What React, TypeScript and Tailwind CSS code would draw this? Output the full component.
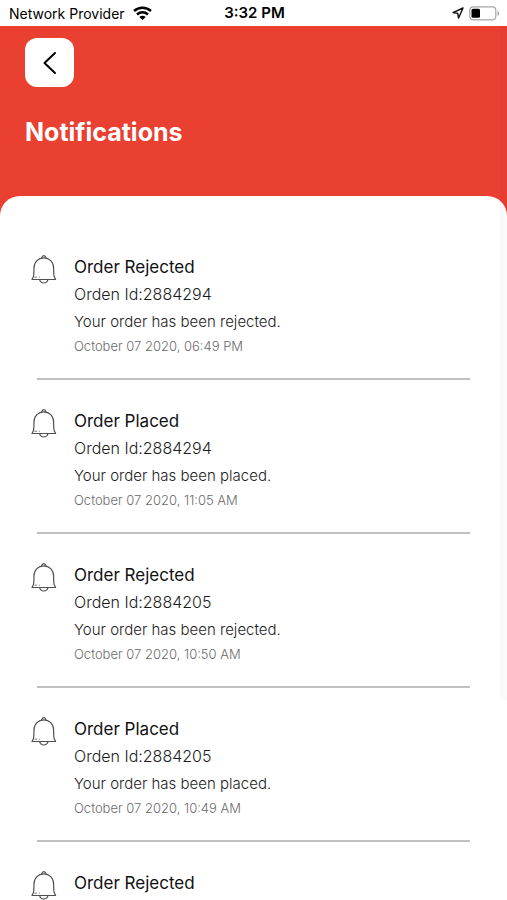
import React from 'react';

interface Notification {
  id: number;
  title: string;
  orderId?: string;
  message?: string;
  date?: string;
}

const notifications: Notification[] = [
  { id: 1, title: 'Order Rejected', orderId: '2884294', message: 'Your order has been rejected.', date: 'October 07 2020, 06:49 PM' },
  { id: 2, title: 'Order Placed', orderId: '2884294', message: 'Your order has been placed.', date: 'October 07 2020, 11:05 AM' },
  { id: 3, title: 'Order Rejected', orderId: '2884205', message: 'Your order has been rejected.', date: 'October 07 2020, 10:50 AM' },
  { id: 4, title: 'Order Placed', orderId: '2884205', message: 'Your order has been placed.', date: 'October 07 2020, 10:49 AM' },
  { id: 5, title: 'Order Rejected' },
];

const BellIcon = () => (
  <svg className="w-[26px] h-[30px] shrink-0" viewBox="0 0 26 30" fill="none" stroke="#505050" strokeWidth="1.2" strokeLinejoin="round" aria-hidden="true">
    <path d="M10.500 4.200C11 2.400 11.800 1.600 12.800 1.600s1.800.8 2.300 2.600" />
    <path d="M2.500 22.500C2.900 20 3 17 3 14C3 7.800 7.300 3.800 12.800 3.800S22.600 7.800 22.600 14c0 3 .1 6 .5 8.500L24.600 25.500H1L2.500 22.500z" />
    <path d="M8.600 25.700C9.200 27.800 10.600 29 12.800 29s3.600-1.200 4.200-3.300" />
    <path d="M3.500 23.200h2.500M7.800 23.200h1" strokeWidth="0.8" />
  </svg>
);

const WifiIcon = () => (
  <svg className="w-[19px] h-[14px]" viewBox="0 0 19 14" fill="none" stroke="#000" strokeWidth="2.600" aria-hidden="true">
    <path d="M1 4.900C5.900.6 13.100.6 18 4.900" />
    <path d="M4 8.400c3.200-2.700 7.800-2.700 11 0" />
    <path d="M9.500 14L6.300 10.900c1.800-1.500 4.600-1.500 6.400 0z" fill="#000" stroke="none" />
  </svg>
);

const LocationIcon = () => (
  <svg className="w-[12px] h-[12px]" viewBox="0 0 12 12" fill="none" stroke="#111" strokeWidth="1.400" strokeLinejoin="round" aria-hidden="true">
    <path d="M11 1L1 5.600l4.700.7L6.600 11z" />
  </svg>
);

const BatteryIcon = () => (
  <svg className="w-[31px] h-[15px]" viewBox="0 0 31 15" fill="none" aria-hidden="true">
    <rect x="0.800" y="0.800" width="26" height="13" rx="3.500" stroke="#a6a6a6" strokeWidth="1.200" />
    <rect x="2.500" y="2.800" width="8.500" height="9" rx="1.500" fill="#000" />
    <path d="M28.500 5v5c1-.4 1.700-1.400 1.700-2.500S29.500 5.400 28.500 5z" fill="#a6a6a6" />
  </svg>
);

const StatusBar = () => (
  <div className="grid grid-cols-[1fr_auto_1fr] items-center h-[26px] pl-[9px] pr-[7px] bg-white text-black">
    <div className="flex items-center gap-2 text-[14px]">
      <span>Network Provider</span>
      <WifiIcon />
    </div>
    <span className="text-[15px] font-semibold">3:32 PM</span>
    <div className="flex items-center justify-end gap-[5px]">
      <LocationIcon />
      <BatteryIcon />
    </div>
  </div>
);

const NotificationItem: React.FC<{ item: Notification }> = ({ item }) => (
  <li className="group">
    <div className="flex gap-[17px] pl-[31px] pr-[37px]">
      <BellIcon />
      <div className="min-w-0 leading-[27px] font-light text-[#1c1c1c]">
        <h2 className="text-[17px] font-normal text-[#111]">{item.title}</h2>
        {item.orderId && <p className="text-[16px]">Orden Id:{item.orderId}</p>}
        {item.message && <p className="text-[15px]">{item.message}</p>}
        {item.date && <p className="text-[13px] leading-[22px] text-[#6b6b6b]">{item.date}</p>}
      </div>
    </div>
    <div className="mt-[21px] mx-[37px] border-b-2 border-[#c0c0c0] group-last:hidden" />
  </li>
);

export default function App() {
  return (
    <div className="relative min-h-screen flex flex-col bg-[#ea4032] font-['Inter','Liberation_Sans',sans-serif]">
      <StatusBar />

      {/* Header */}
      <header className="px-[25px] pt-3 pb-12">
        <button type="button" aria-label="Back" className="flex items-center justify-center w-[49px] h-[49px] rounded-xl bg-white">
          <svg className="w-[14px] h-[24px]" viewBox="0 0 14 24" fill="none" stroke="#000" strokeWidth="2" strokeLinecap="round" strokeLinejoin="round" aria-hidden="true">
            <path d="M12 2L1.500 12L12 22" />
          </svg>
        </button>
        <h1 className="mt-[29px] text-[25px] leading-8 font-bold text-white">Notifications</h1>
      </header>

      {/* Notification list */}
      <main className="flex-1 rounded-t-[20px] bg-white pt-[58px]">
        <ul className="flex flex-col gap-7">
          {notifications.map((item) => (
            <NotificationItem key={item.id} item={item} />
          ))}
        </ul>
      </main>

      {/* Scroll track */}
      <div className="absolute right-0 top-[26px] w-[7px] h-[674px] bg-black/2" />
    </div>
  );
}
